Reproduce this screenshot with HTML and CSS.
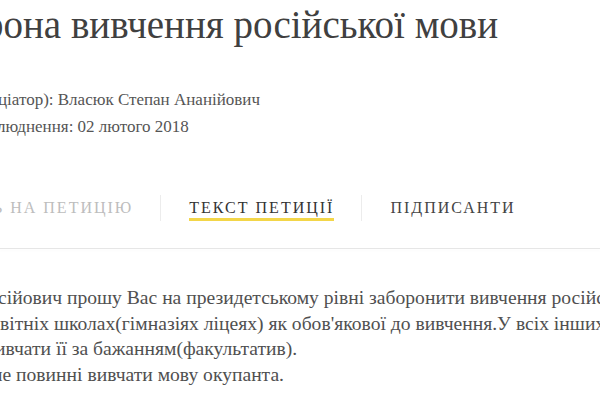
FILE: index.html
```
<!DOCTYPE html>
<html lang="uk">
<head>
<meta charset="utf-8">
<title>Заборона вивчення російської мови</title>
<link rel="stylesheet" href="styles.css">
</head>
<body>
<div class="page">
  <h1 class="title clip shift-title"><span class="pre">Забо</span><span>рона вивчення російської мови</span></h1>
  <div class="meta">
    <div class="clip shift-m1"><span class="pre">Автор (іні</span><span>ціатор): Власюк Степан Ананійович</span></div>
    <div class="clip shift-m2"><span class="pre">Дата оприл</span><span>люднення: 02 лютого 2018</span></div>
  </div>
  <nav class="tabs">
    <div class="tab tab-disabled clip shift-t1"><span class="pre">ВІДПОВІД</span><span class="label">Ь НА ПЕТИЦІЮ</span></div>
    <div class="tab tab-active"><span class="label">ТЕКСТ ПЕТИЦІЇ</span></div>
    <div class="tab"><span class="label">ПІДПИСАНТИ</span></div>
  </nav>
  <div class="rule"></div>
  <div class="text">
    <div class="clip shift-b1"><span class="pre">Я, Власюк Степан Олек</span><span>сійович прошу Вас на президетському рівні заборонити вивчення російської мови в</span></div>
    <div class="clip shift-b2"><span class="pre">загальноос</span><span>вітніх школах(гімназіях ліцеях) як обов'якової до вивчення.У всіх інших закладах</span></div>
    <div class="clip shift-b3"><span class="pre">дозволити в</span><span>ивчати її за бажанням(факультатив).</span></div>
    <div class="clip shift-b4"><span class="pre">Діти </span><span>не повинні вивчати мову окупанта.</span></div>
  </div>
</div>
</body>
</html>
```
FILE: styles.css
```
html, body {
  margin: 0;
  padding: 0;
  background: #ffffff;
  overflow: hidden;
}
.page {
  width: 600px;
  height: 400px;
  overflow: hidden;
  padding-top: 3px;
  white-space: nowrap;
  font-family: "Liberation Serif", serif;
}
.clip {
  display: flex;
  white-space: nowrap;
}
.pre {
  width: 0;
  display: flex;
  justify-content: flex-end;
  white-space: pre;
}
.title {
  margin: 0;
  font-family: "Liberation Serif", serif;
  font-size: 39px;
  line-height: 44px;
  font-weight: normal;
  color: #404040;
}
.shift-title { margin-left: -16px; }
.meta {
  margin-top: 39px;
  font-family: "Liberation Serif", serif;
  font-size: 17px;
  line-height: 27px;
  color: #555555;
}
.shift-m1 { margin-left: -2px; }
.shift-m2 { margin-left: -3px; }
.tabs {
  margin-top: 55px;
  display: flex;
  font-family: "Liberation Serif", serif;
  font-size: 16px;
  letter-spacing: 2px;
  color: #444444;
}
.tab {
  padding: 3px 27px 0 28px;
  border-left: 1px solid #ececec;
  height: 23px;
}
.tab .label {
  display: inline-block;
  line-height: 20px;
  border-bottom: 3px solid transparent;
}
.tab-disabled {
  border-left: none;
  color: #bdbdbd;
  padding-left: 0;
}
.shift-t1 { margin-left: -7px; }
.tab-active { color: #333333; }
.tab-active .label { border-bottom-color: #f3d649; }
.rule {
  margin-top: 27px;
  height: 0;
  border-bottom: 1px solid #e6e6e6;
  box-shadow: 0 2px 3px rgba(0, 0, 0, 0.03);
}
.text {
  margin-top: 36px;
  font-family: "Liberation Serif", serif;
  font-size: 19.6px;
  line-height: 25.7px;
  color: #505050;
}
.shift-b1 { margin-left: -2px; }
.shift-b2 { margin-left: 0; }
.shift-b3 { margin-left: -5px; }
.shift-b4 { margin-left: -8px; }
```
